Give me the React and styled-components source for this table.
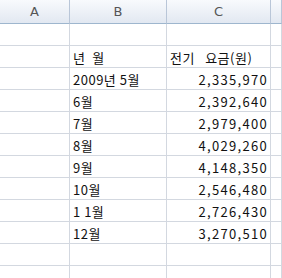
import React from 'react';
import styled, { createGlobalStyle } from 'styled-components';

const GlobalStyle = createGlobalStyle`
  body {
    margin: 0;
    background: #fff;
    overflow: hidden;
    font-family: "Noto Sans CJK KR", "Liberation Sans", sans-serif;
  }
`;

const Sheet = styled.div`
  display: grid;
  grid-template-columns: 70px 97px 104px 1fr;
  width: 282px;
  height: 278px;
  overflow: hidden;
`;

const HeadCell = styled.div`
  height: 23px;
  border-right: 1px solid #b9c6d8;
  border-bottom: 1px solid #9eb6ce;
  background: linear-gradient(#f8fafd, #e2e8f1);
  color: #555;
  font-family: "DejaVu Sans", sans-serif;
  font-size: 13px;
  display: flex;
  align-items: center;
  justify-content: center;
`;

const Cell = styled.div`
  height: 21px;
  border-right: 1px solid #d3d8e0;
  border-bottom: 1px solid #d3d8e0;
  padding: 0 ${p => (p.$num ? '2px' : '3px')} 0 3px;
  font-size: 13px;
  letter-spacing: ${p => (p.$num ? '1.3px' : '0.5px')};
  color: #111;
  display: flex;
  align-items: flex-end;
  justify-content: ${p => (p.$num ? 'flex-end' : 'flex-start')};
  line-height: 18px;
  white-space: pre;
`;

const rows = [
  ['', ''],
  ['년  월', '전기   요금(원)', false],
  ['2009년 5월', '2,335,970', true],
  ['6월', '2,392,640', true],
  ['7월', '2,979,400', true],
  ['8월', '4,029,260', true],
  ['9월', '4,148,350', true],
  ['10월', '2,546,480', true],
  ['1 1월', '2,726,430', true],
  ['12월', '3,270,510', true],
  ['', ''],
  ['', ''],
];

const App = () => (
  <>
    <GlobalStyle />
    <Sheet>
      {['A', 'B', 'C', ''].map((h, i) => (
        <HeadCell key={i}>{h}</HeadCell>
      ))}
      {rows.map(([b, c, num], i) => (
        <React.Fragment key={i}>
          <Cell />
          <Cell>{b}</Cell>
          <Cell $num={num}>{c}</Cell>
          <Cell />
        </React.Fragment>
      ))}
    </Sheet>
  </>
);

export default App;
